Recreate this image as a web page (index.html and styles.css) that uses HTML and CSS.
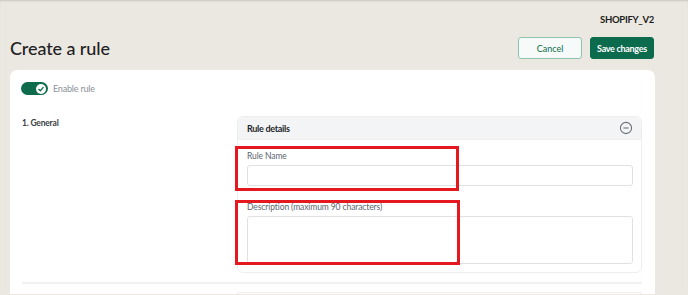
FILE: index.html
```html
<!DOCTYPE html>
<html lang="en">
<head>
    <meta charset="UTF-8">
    <meta name="viewport" content="width=device-width, initial-scale=1.0">
    <title>Create a rule</title>
    <link rel="stylesheet" href="styles.css">
</head>
<body>
    <div class="store-name">SHOPIFY_V2</div>
    <div class="page-header">
        <h1 class="page-title">Create a rule</h1>
        <div class="actions">
            <button class="btn btn-secondary">Cancel</button>
            <button class="btn btn-primary">Save changes</button>
        </div>
    </div>
    <div class="card">
        <div class="toggle-row">
            <span class="toggle">
                <span class="knob">
                    <svg width="8" height="8" viewBox="0 0 10 10"><path d="M2.2 5.4 L4.2 7.2 L7.8 3" fill="none" stroke="#0e6b4c" stroke-width="1.6" stroke-linecap="round" stroke-linejoin="round"/></svg>
                </span>
            </span>
            <span class="toggle-label">Enable rule</span>
        </div>
        <div class="section">
            <div class="section-title">1. General</div>
            <div class="panel">
                <div class="panel-header">
                    <span>Rule details</span>
                    <svg width="14" height="14" viewBox="0 0 14 14"><circle cx="7" cy="7" r="5.6" fill="none" stroke="#6b7079" stroke-width="1.1"/><path d="M4.4 7 H9.6" stroke="#6b7079" stroke-width="1.1"/></svg>
                </div>
                <div class="panel-body">
                    <label class="field">
                        <span class="field-label">Rule Name</span>
                        <input type="text" class="input">
                    </label>
                    <label class="field">
                        <span class="field-label">Description (maximum 90 characters)</span>
                        <textarea class="input textarea"></textarea>
                    </label>
                </div>
                <!-- red annotation boxes -->
                <div class="mark mark-name"></div>
                <div class="mark mark-desc"></div>
            </div>
        </div>
        <div class="divider"></div>
        <div class="section section-next">
            <div></div>
            <div class="panel panel-next"></div>
        </div>
    </div>
</body>
</html>
```

FILE: styles.css
```css
html {
    overflow: hidden;
}
body {
    margin: 0;
    padding: 0;
    background: #ebe8e1;
    font-family: Lato, "Liberation Sans", sans-serif;
    color: #1f2124;
    box-shadow: inset 0 2px 2px -1px rgba(0, 0, 0, 0.15);
}
.store-name {
    text-align: right;
    padding: 14px 34px 0 0;
    font-size: 9.5px;
    font-weight: bold;
    line-height: 12px;
    letter-spacing: -0.3px;
    color: #1b1d20;
}
.page-header {
    display: flex;
    justify-content: space-between;
    align-items: center;
    height: 22px;
    margin-top: 11px;
    padding: 0 34px 0 10px;
}
.page-title {
    margin: 0;
    font-size: 18px;
    font-weight: 500;
    line-height: 22px;
    letter-spacing: -0.1px;
}
.actions {
    display: flex;
    gap: 8px;
}
.btn {
    height: 22px;
    width: 64px;
    border-radius: 3px;
    font-family: inherit;
    font-size: 9px;
    padding: 0;
    cursor: pointer;
}
.btn-secondary {
    background: #f6fbf9;
    border: 1px solid #8fc3ae;
    color: #0b6b4a;
}
.btn-primary {
    background: #0b6b4c;
    border: 1px solid #0b6b4c;
    color: #fff;
    font-weight: bold;
    letter-spacing: -0.3px;
}
.card {
    margin: 11px 33px 0 10px;
    background: #fff;
    border-radius: 7px 7px 0 0;
    padding: 12px 13px 0 11px;
}
.toggle-row {
    display: flex;
    align-items: center;
    gap: 5px;
}
.toggle {
    display: flex;
    align-items: center;
    justify-content: flex-end;
    width: 27px;
    height: 13px;
    border-radius: 7px;
    background: #0e6b4c;
    padding: 0 2px;
    box-sizing: border-box;
}
.knob {
    display: flex;
    align-items: center;
    justify-content: center;
    width: 10px;
    height: 10px;
    border-radius: 50%;
    background: #fff;
}
.toggle-label {
    font-size: 9px;
    color: #8c9198;
    letter-spacing: -0.2px;
}
.section {
    display: grid;
    grid-template-columns: 215px 1fr;
    padding-left: 1px;
    margin-top: 21px;
}
.section-title {
    font-size: 8.5px;
    font-weight: bold;
    color: #3a3f45;
    letter-spacing: -0.2px;
    padding-top: 2px;
}
.panel {
    position: relative;
    border: 1px solid #eceef0;
    border-radius: 6px;
}
.panel-header {
    display: flex;
    justify-content: space-between;
    align-items: center;
    height: 22px;
    padding: 0 8px 0 9px;
    background: #f3f4f6;
    border-bottom: 1px solid #eceef0;
    border-radius: 6px 6px 0 0;
    font-size: 9px;
    font-weight: bold;
    letter-spacing: -0.3px;
    color: #222529;
}
.panel-body {
    padding: 10px 8px 8px 9px;
    display: flex;
    flex-direction: column;
    gap: 15px;
}
.field {
    display: flex;
    flex-direction: column;
    gap: 3px;
}
.field-label {
    font-size: 8.5px;
    color: #5d6570;
    line-height: 12px;
    letter-spacing: -0.1px;
}
.input {
    box-sizing: border-box;
    height: 21px;
    border: 1px solid #dfe1e4;
    border-radius: 3px;
    margin: 0;
    padding: 0 6px;
    font-family: inherit;
}
.textarea {
    height: 48px;
    resize: none;
}
.mark {
    position: absolute;
    left: -3px;
    border: 3px solid #e4181e;
    box-sizing: border-box;
}
.mark-name {
    top: 29px;
    width: 224px;
    height: 45px;
}
.mark-desc {
    top: 83px;
    width: 225px;
    height: 65px;
}
.divider {
    height: 2px;
    background: #f0f1f2;
    margin-top: 9px;
    margin-left: 1px;
}
.section-next {
    margin-top: 8px;
}
.panel-next {
    height: 1px;
    border-bottom: none;
    border-radius: 6px 6px 0 0;
}
```
